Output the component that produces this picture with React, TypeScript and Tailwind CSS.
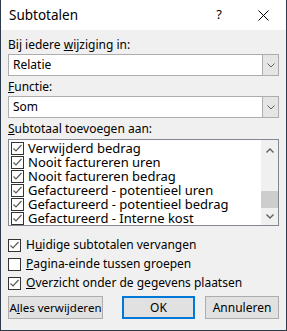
import React from 'react';

const font = { fontFamily: '"Noto Sans", "Open Sans", sans-serif' };

const Check: React.FC<{ checked?: boolean }> = ({ checked }) => (
  <span className="w-[13px] h-[13px] shrink-0 border border-[#333333] bg-white flex items-center justify-center">
    {checked && (
      <svg width="11" height="11" viewBox="0 0 11 11">
        <path d="M1.5 5.5 L4 8 L9.5 2" fill="none" stroke="#5a5a5a" strokeWidth="1.2" />
      </svg>
    )}
  </span>
);

const Combo: React.FC<{ value: string }> = ({ value }) => (
  <div className="mx-[7px] h-[22px] border border-[#adadad] bg-white flex items-center">
    <span className="flex-1 pl-[4px] text-black">{value}</span>
    <span className="w-[16px] h-full bg-[#e5e5e5] border-l border-[#adadad] flex items-center justify-center">
      <svg width="8" height="5" viewBox="0 0 8 5">
        <path d="M0.5 0.5 L4 4 L7.5 0.5" fill="none" stroke="#606060" strokeWidth="1" />
      </svg>
    </span>
  </div>
);

const items = [
  'Verwijderd bedrag',
  'Nooit factureren uren',
  'Nooit factureren bedrag',
  'Gefactureerd - potentieel uren',
  'Gefactureerd - potentieel bedrag',
  'Gefactureerd - Interne kost',
];

export default function App() {
  return (
    <div className="w-[287px] h-[331px] border border-t-0 border-[#2b3b4c] bg-[#f0f0f0] flex flex-col text-black text-[12px]" style={font}>
      {/* Title bar */}
      <div className="h-[30px] bg-white flex items-center pl-[8px] shrink-0">
        <span className="flex-1 text-[13.5px]">Subtotalen</span>
        <span className="w-[14px] text-center text-[13px] mr-[32px]">?</span>
        <svg width="11" height="11" viewBox="0 0 11 11" className="mr-[17px]">
          <path d="M0.5 0.5 L10.5 10.5 M10.5 0.5 L0.5 10.5" stroke="#000" strokeWidth="1" />
        </svg>
      </div>

      <div className="flex flex-col leading-[16px]">
        <div className="pl-[7px] mt-[7px] mb-[1px]">Bij iedere <u>w</u>ijziging in:</div>
        <Combo value="Relatie" />
        <div className="pl-[7px] mt-[3px] mb-[1px]"><u>F</u>unctie:</div>
        <Combo value="Som" />
        <div className="pl-[7px] mt-[3px] mb-[2px]"><u>S</u>ubtotaal toevoegen aan:</div>
        <div className="mx-[7px] h-[87px] border border-[#828790] bg-white flex">
          <div className="flex-1 flex flex-col pt-[1px] pl-[2px] text-[13px]">
            {items.map((t) => (
              <div key={t} className="h-[14px] flex items-center gap-[4px]">
                <Check checked />
                <span className="leading-[14px] whitespace-nowrap">{t}</span>
              </div>
            ))}
          </div>
          <div className="w-[17px] bg-[#f0f0f0] flex flex-col items-center">
            <div className="h-[17px] flex items-center justify-center mt-[2px]">
              <svg width="8" height="5" viewBox="0 0 8 5">
                <path d="M0.5 4.5 L4 1 L7.5 4.5" fill="none" stroke="#606060" strokeWidth="1.4" />
              </svg>
            </div>
            <div className="flex-1 w-full flex flex-col justify-end">
              <div className="h-[17px] w-full bg-[#cdcdcd]" />
            </div>
            <div className="h-[17px] flex items-center justify-center">
              <svg width="8" height="5" viewBox="0 0 8 5">
                <path d="M0.5 0.5 L4 4 L7.5 0.5" fill="none" stroke="#606060" strokeWidth="1.4" />
              </svg>
            </div>
          </div>
        </div>

        <div className="flex flex-col gap-[3px] mt-[11px] pl-[7px]">
          <div className="h-[16px] flex items-center gap-[5px]"><Check checked /><span>H<u>u</u>idige subtotalen vervangen</span></div>
          <div className="h-[16px] flex items-center gap-[5px]"><Check /><span><u>P</u>agina-einde tussen groepen</span></div>
          <div className="h-[16px] flex items-center gap-[5px]"><Check checked /><span><u>O</u>verzicht onder de gegevens plaatsen</span></div>
        </div>

        <div className="flex items-center mt-[5px] px-[7px]">
          <div className="w-[95px] h-[23px] border border-[#adadad] bg-[#e1e1e1] flex items-center justify-center"><span className="whitespace-nowrap text-[11.5px]">A<u>l</u>les verwijderen</span></div>
          <div className="w-[73px] h-[23px] ml-[19px] border-2 border-[#0078d7] bg-[#e1e1e1] flex items-center justify-center">OK</div>
          <div className="w-[74px] h-[23px] ml-auto border border-[#adadad] bg-[#e1e1e1] flex items-center justify-center">Annuleren</div>
        </div>
      </div>
    </div>
  );
}
